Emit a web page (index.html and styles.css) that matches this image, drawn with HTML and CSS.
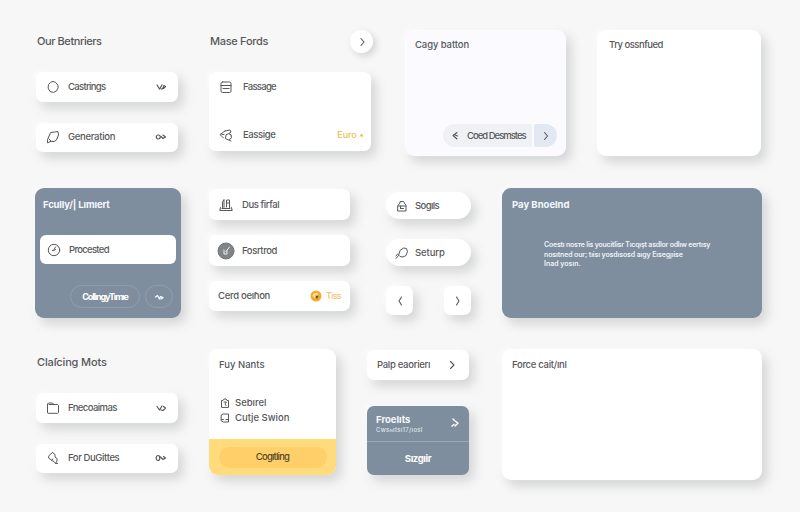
FILE: index.html
```html
<!DOCTYPE html>
<html lang="en">
<head>
<meta charset="utf-8">
<title>Card components</title>
<link rel="stylesheet" href="styles.css">
</head>
<body>
<main class="board">
  <section class="row row-top">
    <div class="stack list">
      <h2 class="heading t-our">Our Betnriers</h2>
      <div class="card item"><svg class="icon" viewBox="0 0 14 14"><path d="M5 2Q7 .8 9.300 2.200L12 5.200Q12.800 8 10.500 11Q7.500 13.600 4 11.500Q1 8 2.300 5z"/></svg><span class="label t-cast">Castrings</span><svg class="mark" viewBox="0 0 12 10"><path d="M2 3l2.500 4 2.500-4M6 7l2.500-.5 2-2L9 3.500 7.500 7"/></svg></div>
      <div class="card item"><svg class="icon" viewBox="0 0 14 14"><path d="M5 2.500L8.500 2l3.500-.5.5 3.500-2 5L8 11.500l-3-.2-3.500 1.600V10zM3 9l2 2"/></svg><span class="label t-gen">Generation</span><svg class="mark" viewBox="0 0 12 10"><circle cx="3.300" cy="5" r="2"/><path d="M6 4.500L8 6.500 10.500 5 8 3"/></svg></div>
    </div>
    <div class="stack mase">
      <div class="mase-head"><h2 class="heading t-mase">Mase Fords</h2><span class="round"><svg class="chev" viewBox="0 0 8 10"><path d="M3 1.500l3 3.500-3 3.500"/></svg></span></div>
      <div class="card menu">
        <div class="line"><svg class="icon" viewBox="0 0 14 14"><rect x="2" y="2" width="10" height="10.500" rx="1.500"/><path d="M2 5.500h10M4 8.500h6"/></svg><span class="label t-fass">Fassage</span></div>
        <div class="line"><svg class="icon" viewBox="0 0 14 14"><path d="M6 3L1 6.500l3.500 3.500M3 6.500h2M6 3l5-1 1 2-2 1.500M12 7l.5 3-3 2-3-1.500L7 7l2.500-1.500L12 7M10 12l2 1"/></svg><span class="label t-eass">Eassige</span><span class="gold">Euro •</span></div>
      </div>
    </div>
    <div class="card panel lilac">
      <h3 class="title t-copy">Cagy batton</h3>
      <div class="split"><span class="split-main"><svg class="chev" viewBox="0 0 8 10"><path d="M6 1.500L2 4.500 6 8M3 3.500l3.500 1.500"/></svg><span class="label t-desm">Coed Desmstes</span></span><span class="split-next"><svg class="chev" viewBox="0 0 8 10"><path d="M2.500 1.500l3 3.500-3 3.500"/></svg></span></div>
    </div>
    <div class="card panel plain"><h3 class="title t-try">Try ossnfued</h3></div>
  </section>

  <section class="row row-mid">
    <div class="card slate profile">
      <h3 class="title t-fami">Fcully/| Lımıert</h3>
      <div class="item inset"><svg class="icon" viewBox="0 0 14 14"><circle cx="7" cy="7" r="5.700"/><path d="M8.500 4L6.500 7.500H5.500M8.500 6.500L7 7.500"/></svg><span class="label t-proc">Procested</span></div>
      <div class="actions"><span class="ghost">CollıngyTımıe</span><span class="ghost small"><svg class="mark" viewBox="0 0 12 10"><path d="M2.500 5l2-1.500L6.500 7l1-2.500L10 5.500 8 7"/></svg></span></div>
    </div>
    <div class="stack options">
      <div class="card item"><svg class="icon" viewBox="0 0 14 14"><path d="M1.500 9.500L.8 12.500h12.400l-.8-3M3.500 9.500V4L5 1.500V9.500M7.500 9V2h3v3H8M10.500 5v4.500M3 10.500h8"/></svg><span class="label t-dus">Dus firfal</span></div>
      <div class="card item"><svg class="disc" viewBox="0 0 18 18"><circle class="disc-bg" cx="9" cy="9" r="8"/><path class="disc-mark" d="M12.500 5L9 9.500M7 8v4h3V9"/></svg><span class="label t-fos">Fosrtrod</span></div>
      <div class="card item"><span class="label t-cerd">Cerd oeıɦon</span><svg class="coin" viewBox="0 0 12 12"><circle class="coin-bg" cx="6" cy="6" r="5.500"/><path class="coin-shine" d="M2.500 6a3.500 3.500 0 0 1 6-2L5 8z"/><path class="coin-dot" d="M5.500 5.500l3 .5-1 2.500H6z"/></svg><span class="gold pale">Tıss</span></div>
    </div>
    <div class="stack pills">
      <div class="card pill"><svg class="icon" viewBox="0 0 14 14"><path d="M3 6.500L5 4V2.500h3.500L10 5l1 1.500v5.500H3zM3 7h8M5.500 7v2.500M8.500 9.500h-3"/></svg><span class="label t-sog">Sogıls</span></div>
      <div class="card pill"><svg class="icon" viewBox="0 0 14 14"><path d="M1 12.500l2.500-3 1.500-5 3.500-2.500 3 .5 1 3-1.500 4L8 11l-3-.5L3.500 9M2.500 8L1 10"/></svg><span class="label t-set">Seturp</span></div>
      <div class="pager"><span class="card key"><svg class="chev" viewBox="0 0 8 10"><path d="M5.500 1L3 5l2.500 4"/></svg></span><span class="card key"><svg class="chev" viewBox="0 0 8 10"><path d="M2.500 1L5 5 2.500 9"/></svg></span></div>
    </div>
    <div class="card slate banner"><h3 class="title t-pay">Pay Bnoelnd</h3>
      <p class="copy"><span class="c1">Coestı nosᴛe lis youcitlisr Tıcqışt asdlor odlıw eertısy</span><span class="c2">nosıtned our; tıisı yosdısosd aıgy Eısegȷıise</span><span class="c3">Inad yosın.</span></p></div>
  </section>

  <section class="row row-low">
    <div class="stack list">
      <h2 class="heading t-clat">Claſcing Mots</h2>
      <div class="card item"><svg class="icon" viewBox="0 0 14 14"><path d="M1.500 11.500V3L2.500 2h4L8 3.500h3.500l1 1v7l-1 .8h-9zM3 3.500h5"/></svg><span class="label t-fnec">Fnecoaimas</span><svg class="mark" viewBox="0 0 12 10"><path d="M2 3.500L4.500 7 7 3M6 7l2 .5L10.500 5 8.500 3.500"/></svg></div>
      <div class="card item"><svg class="icon" viewBox="0 0 14 14"><path d="M6.500 1.500L3 4.500 2.500 7l3 2 1.500-1M6.500 1.500L9 3.500v2.500l2 1.500V10l-1.500 2.500L8 10.500l-2.500-1M9.500 12.500h2"/></svg><span class="label t-for">For DuGittes</span><svg class="mark" viewBox="0 0 12 10"><ellipse cx="3" cy="5" rx="1.800" ry="2.500"/><path d="M5.500 4L8 6.500 10.500 5 8.500 3.500"/></svg></div>
    </div>
    <div class="card offer">
      <h3 class="title">Fuy Nants</h3>
      <ul class="checks">
        <li><svg class="tick" viewBox="0 0 10 10"><path d="M1.500 9V2.500H3L4 1h2l1 1.500h1.500V9zM4 4h2.500L5 6l1 1.500"/></svg><span class="label">Sebırel</span></li>
        <li><svg class="tick" viewBox="0 0 10 10"><path d="M1.500 2L3 1h5.500v8h-5l-2-1zM1.500 6.500h2M6 6.500h2.500"/></svg><span class="label">Cutje Swion</span></li>
      </ul>
      <div class="foot"><span class="cta">Cogıtling</span></div>
    </div>
    <div class="stack side">
      <div class="card link"><span class="label t-palp">Palp eaorierı</span><svg class="chev" viewBox="0 0 8 10"><path d="M1.500 1.500L5 5 1.500 8.500"/></svg></div>
      <div class="card slate duo">
        <div class="duo-top"><div><h3 class="title t-fro">Froelıts</h3><p class="tiny">Cwsɴıtsı17/ıosl</p></div><svg class="chev" viewBox="0 0 8 10"><path d="M2 1l1 1M4 3l3 2-3 3M1 8l2-1.500"/></svg></div>
        <div class="duo-bottom">Sızgıir</div>
      </div>
    </div>
    <div class="card panel force"><h3 class="title t-force">Force cait/ınl</h3></div>
  </section>
</main>
</body>
</html>
```
FILE: styles.css
```css
* { box-sizing: border-box; }
body { margin: 0; width: 800px; height: 512px; overflow: hidden; background: #f7f7f7; color: #57585a; font: 500 9.5px/12px Inter, "Liberation Sans", sans-serif; }
h2, h3, p, ul { margin: 0; padding: 0; }
svg { display: block; flex: none; fill: none; stroke: currentColor; stroke-width: 1; stroke-linecap: round; stroke-linejoin: round; overflow: visible; }
.board { padding: 30px 38px 0 35px; }
.row { display: flex; align-items: flex-start; }
.row-top { height: 158px; }
.row-mid { height: 161px; }
.stack { display: flex; flex-direction: column; }
.card { background: #fff; border-radius: 7px; box-shadow: 5px 6px 11px rgba(80, 84, 88, .21), -2px -1px 5px rgba(255, 255, 255, .8); }
.heading { font-size: 11px; line-height: 14px; font-weight: 500; height: 42px; padding: 4px 0 0 1px; white-space: nowrap; }
.label, .title { white-space: nowrap; }
.icon { width: 14px; height: 14px; }
.mark { width: 12px; height: 10px; margin-left: auto; stroke-width: 1.200; }
.chev { width: 8px; height: 10px; stroke-width: 1.100; }

/* Label tracking */
.t-our { letter-spacing: -.42px; }
.t-mase { letter-spacing: -.3px; }
.t-clat { letter-spacing: -.15px; }
.t-cast, .t-fass, .t-proc { letter-spacing: -.7px; }
.t-fnec { letter-spacing: -.6px; }
.t-eass, .t-for, .t-fos, .t-dus { letter-spacing: -.4px; }
.t-gen, .t-cerd, .t-palp, .t-force { letter-spacing: -.3px; }
.t-desm { letter-spacing: -1px; }
.t-try { letter-spacing: -.5px; }
.t-fami { letter-spacing: -.15px; }
.t-sog { letter-spacing: -.6px; }
.t-copy, .t-set { letter-spacing: -.1px; }

.list { width: 142px; margin: 0 31px 0 1px; gap: 21px; }
.list .heading { margin-bottom: -21px; }
.item { display: flex; align-items: center; height: 29.500px; padding: 0 11px 0 10px; }
.item .icon { margin-right: 8px; }
.mase { width: 164px; margin-right: 32px; }
.mase-head { display: flex; justify-content: space-between; }
.round { width: 23px; height: 23px; border-radius: 50%; background: #fff; display: grid; place-items: center; box-shadow: 3px 3px 7px rgba(80, 84, 88, .22); }
.menu { width: 162px; height: 79px; padding: 8px 7px 9px 10px; display: flex; flex-direction: column; justify-content: space-between; }
.line { display: flex; align-items: center; }
.line .icon { margin-right: 10px; }
.gold { margin-left: auto; color: #edc34e; font-size: 9px; }
.panel { height: 126px; border-radius: 9px; padding: 9px 12px; }
.plain { width: 164px; }
.title { font-size: 9.500px; line-height: 12px; font-weight: 500; }
.lilac { width: 161px; margin-right: 31px; padding: 8px 8px 8px 9px; background: #fafaff; display: flex; flex-direction: column; justify-content: space-between; align-items: flex-end; border: 1px solid #fdfdff; }
.lilac .title { align-self: flex-start; }
.split { display: flex; gap: 2px; height: 23px; }
.split-main { width: 89px; display: flex; align-items: center; gap: 8px; padding-left: 8px; background: #f0f1f5; border-radius: 12px 2px 2px 12px; }
.split-next { width: 23px; display: grid; place-items: center; background: #e2e9f3; border-radius: 2px 12px 12px 2px; }

.slate { background: #7f8e9e; color: #fff; }
.slate .title { font-weight: 700; color: #f5f8fb; }
.profile { width: 146px; height: 130px; margin-right: 28px; border-radius: 9px; padding: 11px 5px 10px; display: flex; flex-direction: column; }
.profile .title { padding-left: 3px; }
.inset { background: #fff; color: #57585a; border-radius: 6px; margin-top: 24px; height: 29px; padding: 0 7px; }
.actions { display: flex; justify-content: flex-end; gap: 5px; margin-top: auto; padding-right: 3px; }
.ghost { width: 70px; height: 23px; border: 1px solid #919dab; border-radius: 12px; display: grid; place-items: center; font-size: 9px; font-weight: 700; letter-spacing: -1.150px; white-space: nowrap; }
.ghost.small { width: 28px; }
.ghost .mark { margin: 0; }
.options { width: 141px; margin: 1px 36px 0 0; gap: 15px; }
.options .item { height: 31px; padding: 0 9px; }
.options .item:last-child { height: 30px; }
.options .icon { margin: 0 9px 0 1px; }
.options .disc { width: 18px; height: 18px; margin: 0 7px 0 -1px; }
.disc-bg { fill: #808486; stroke: #73777a; }
.disc-mark { stroke: #edf0f0; }
.coin { width: 12px; height: 12px; margin-left: auto; }
.coin-bg { fill: #efad35; stroke: none; }
.coin-shine { fill: #ffe08a; stroke: none; }
.coin-dot { fill: #73501c; stroke: none; }
.pale { margin-left: 4px; color: #f2c27c; letter-spacing: -.7px; }
.pills { width: 85px; margin: 4px 31px 0 0; gap: 20px; }
.pill { height: 27px; border-radius: 14px; display: flex; align-items: center; gap: 6px; padding-left: 9px; }
.pager { display: flex; justify-content: space-between; }
.key { width: 27px; height: 29px; display: grid; place-items: center; }
.banner { width: 260px; height: 130px; border-radius: 9px; padding: 11px 10px; }
.copy { margin: 29px 0 0 32px; font-size: 7px; line-height: 9.500px; color: #edf2f7; font-weight: 600; }
.copy span { display: block; white-space: nowrap; }
.c1 { letter-spacing: -.22px; }
.c2 { letter-spacing: -.13px; }

.row-low .list { padding-top: 2px; }
.offer { width: 127px; height: 126px; margin-right: 31px; border-radius: 9px; overflow: hidden; display: flex; flex-direction: column; }
.offer .title { padding: 10px 0 0 10px; }
.checks { list-style: none; padding: 26px 0 0 11px; display: flex; flex-direction: column; gap: 3px; }
.checks li { display: flex; align-items: center; gap: 5px; }
.tick { width: 10px; height: 10px; }
.foot { margin-top: auto; height: 36px; background: #ffdb7b; display: grid; place-items: center; }
.cta { width: 108px; height: 21px; border-radius: 10px; background: #ffd06a; color: #554729; display: grid; place-items: center; letter-spacing: -.8px; }
.side { width: 102px; margin-right: 33px; gap: 26px; padding-top: 1px; }
.link { height: 30px; display: flex; justify-content: space-between; align-items: center; padding: 0 12px 0 10px; }
.duo { height: 69px; display: flex; flex-direction: column; }
.duo-top { height: 36px; border-bottom: 1px solid #9da9b5; display: flex; justify-content: space-between; padding: 8px 10px 0 9px; }
.duo-top .chev { margin-top: 4px; stroke-width: 1.500; }
.tiny { font-size: 6px; line-height: 7px; white-space: nowrap; color: #dfe6ed; letter-spacing: .3px; }
.duo-bottom { flex: 1; display: grid; place-items: center; font-weight: 700; letter-spacing: -.4px; }
.force { width: 260px; height: 131px; padding: 10px; }
```
